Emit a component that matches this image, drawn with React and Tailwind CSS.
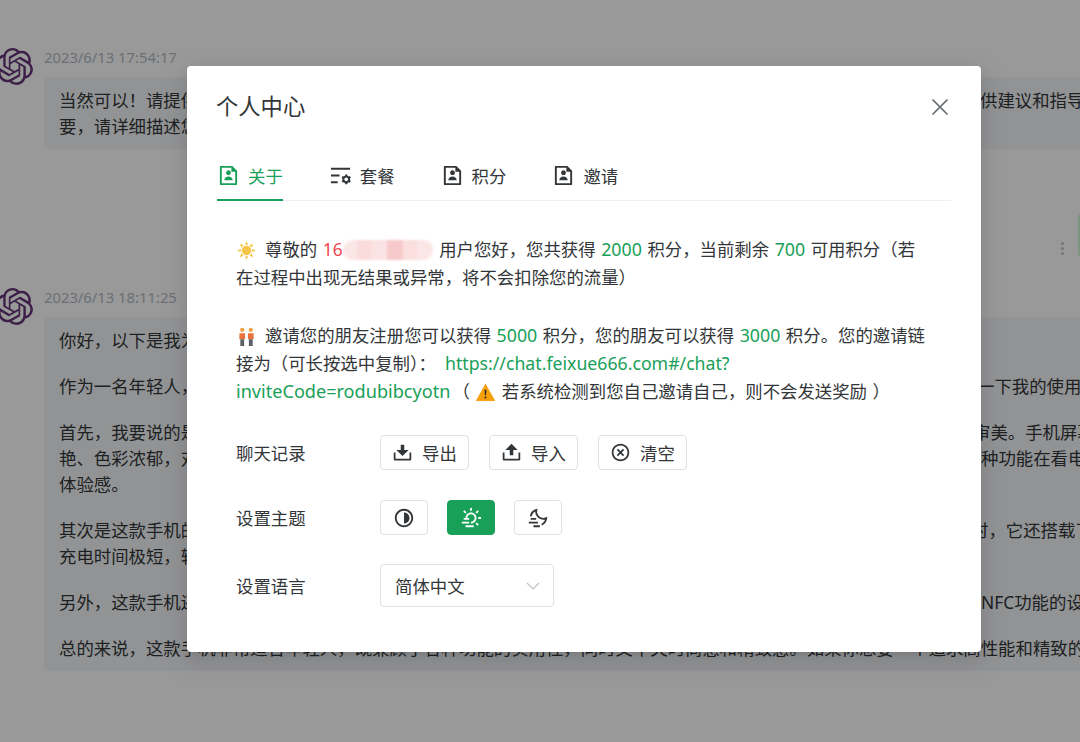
import React from 'react';
import {
  RiFileUserLine,
  RiListSettingsLine,
  RiDownload2Fill,
  RiUpload2Fill,
  RiCloseCircleLine,
  RiContrastLine,
  RiSunFoggyLine,
  RiMoonFoggyLine,
} from 'react-icons/ri';
import { SiOpenai } from 'react-icons/si';

// one line of the chat text: left part runs under the modal, right part comes out at the other side
function ChatLine({ left, right, leftWidth }) {
  return (
    <div className="flex h-[26px] whitespace-nowrap">
      <span className={`${leftWidth} shrink-0 overflow-hidden`}>{left}</span>
      {right && <span>{right}</span>}
    </div>
  );
}

function Stamp({ children }) {
  return (
    <div className="flex items-start -ml-[4px]">
      <SiOpenai size={37} className="mt-[1px] shrink-0 text-[#64327a]" />
      <div className="ml-[11px] h-[20px] text-[14.8px] leading-[20px] text-[#b4bbc4]">{children}</div>
    </div>
  );
}

function Bubble({ children }) {
  return (
    <div className="-mt-[8px] ml-[44px] w-[1100px] rounded-[5px] bg-[#f4f6f8] px-[15px] py-[10px] text-[17.4px] leading-[26px] text-[#333639]">
      {children}
    </div>
  );
}

function Chat() {
  return (
    <div className="pt-[47px]">
      <Stamp>2023/6/13 17:54:17</Stamp>
      <Bubble>
        <ChatLine left="当然可以！请提供您的具体问题" right="供建议和指导" leftWidth="w-[921px]" />
        <ChatLine left="要，请详细描述您的需求" leftWidth="w-[921px]" />
      </Bubble>

      <div className="mt-[65px] flex h-[42px] items-end justify-end">
        <div className="mr-[14px] flex flex-col gap-[2px] pb-[1px]">
          <span className="h-[3px] w-[3px] rounded-full bg-[#c4c4c4]" />
          <span className="h-[3px] w-[3px] rounded-full bg-[#c4c4c4]" />
          <span className="h-[3px] w-[3px] rounded-full bg-[#c4c4c4]" />
        </div>
        <div className="h-[42px] w-[2px] rounded-l-[3px] bg-[#d2f9d1]" />
      </div>

      <div className="mt-[31px]">
        <Stamp>2023/6/13 18:11:25</Stamp>
        <Bubble>
          <ChatLine left="你好，以下是我为您写的手机评测" leftWidth="w-[921px]" />
          <div className="mt-[20px]">
            <ChatLine left="作为一名年轻人，我最近入手了这款手机" right="一下我的使用心得" leftWidth="w-[918px]" />
          </div>
          <div className="mt-[20px]">
            <ChatLine left="首先，我要说的是这款手机的外观" right="审美。手机屏幕" leftWidth="w-[914px]" />
            <ChatLine left="艳、色彩浓郁，对比度高" right="种功能在看电" leftWidth="w-[922px]" />
            <ChatLine left="体验感。" leftWidth="w-[922px]" />
          </div>
          <div className="mt-[20px]">
            <ChatLine left="其次是这款手机的性能" right="时，它还搭载了" leftWidth="w-[912px]" />
            <ChatLine left="充电时间极短，轻松满足日常使用" leftWidth="w-[922px]" />
          </div>
          <div className="mt-[20px]">
            <ChatLine left="另外，这款手机还支持多种功能" right="NFC功能的设" leftWidth="w-[922px]" />
          </div>
          <div className="mt-[20px] h-[26px] whitespace-nowrap">
            总的来说，这款手机非常适合年轻人，既兼顾了各种功能的实用性，同时又不失时尚感和精致感。如果你想要一个追求高性能和精致的手机
          </div>
        </Bubble>
      </div>
    </div>
  );
}

function Tab({ icon, label, active }) {
  return (
    <div
      className={`-mb-px flex h-[49px] items-center gap-[8px] border-b-2 ${
        active ? 'border-[#18a058] text-[#18a058]' : 'border-transparent text-[#333639]'
      }`}
    >
      {icon}
      <span>{label}</span>
    </div>
  );
}

function ActionButton({ icon, label }) {
  return (
    <button className="flex h-[35px] w-[89px] items-center justify-center gap-[9px] rounded-[4px] border border-[#e0e0e6] bg-white text-[#333639]">
      {icon}
      <span>{label}</span>
    </button>
  );
}

function ThemeButton({ icon, active }) {
  return (
    <button
      className={`flex h-[35px] w-[48px] items-center justify-center rounded-[4px] border ${
        active ? 'border-[#18a058] bg-[#18a058] text-white' : 'border-[#e0e0e6] bg-white text-[#333639]'
      }`}
    >
      {icon}
    </button>
  );
}

function SunEmoji() {
  return (
    <svg viewBox="0 0 20 20" className="mr-[9px] ml-px inline-block h-[19px] w-[19px] -translate-y-[1px] align-middle">
      <g fill="#f7c648">
        <circle cx="10" cy="10" r="5" />
        <path d="M10 0l1.600 4h-3.200zM10 20l-1.600-4h3.200zM0 10l4-1.600v3.200zM20 10l-4 1.600V8.400zM3 3l4 1.600L4.600 7zM17 17l-4-1.600L15.400 13zM17 3l-1.600 4L13 4.600zM3 17l1.600-4L7 15.400z" />
      </g>
    </svg>
  );
}

function PeopleEmoji() {
  return (
    <svg viewBox="0 0 20 20" className="mr-[9px] ml-px inline-block h-[19px] w-[19px] -translate-y-[1px] align-middle">
      <circle cx="5.500" cy="3" r="2.300" fill="#f0a24b" />
      <circle cx="14.500" cy="3" r="2.300" fill="#f0a24b" />
      <path d="M2.500 6.500h6v6.500h-6zM11.500 6.500h6v6.500h-6z" fill="#e8743b" />
      <path d="M3.500 13h4v7h-4zM12.500 13h4v7h-4z" fill="#5b5f66" />
    </svg>
  );
}

function WarnEmoji() {
  return (
    <svg viewBox="0 0 20 20" className="mr-[7px] ml-[6px] inline-block h-[19px] w-[19px] -translate-y-[1px] align-middle">
      <path d="M10 1.500L19.500 18.500H.5z" fill="#f59f0b" stroke="#f59f0b" strokeLinejoin="round" />
      <path d="M9 7h2l-.4 6h-1.200z" fill="#2b2b2b" />
      <circle cx="10" cy="15.300" r="1.100" fill="#2b2b2b" />
    </svg>
  );
}

function BlurredPhone() {
  return (
    <span className="mr-px inline-flex h-[20px] w-[90px] translate-y-[4px] overflow-hidden rounded-full bg-[#fbe6e6] blur-[1px]">
      <span className="ml-[14px] w-[14px] bg-[#fadcdc]" />
      <span className="w-[16px] bg-[#fbe3e3]" />
      <span className="w-[16px] bg-[#f6caca]" />
      <span className="w-[14px] bg-[#fbdede]" />
    </span>
  );
}

function Num({ children }) {
  return <span className="text-[17.8px] text-[#18a058]">{children}</span>;
}

export default function App() {
  return (
    <div className="relative h-[742px] w-[1080px] overflow-hidden bg-white font-['Noto_Sans','Noto_Sans_CJK_SC',sans-serif]">
      <Chat />

      <div className="absolute inset-0 bg-black/40 pt-[66px] pl-[187px]">
        <div className="h-[586px] w-[794px] rounded-[4px] bg-white px-[30px] pt-[25px] text-[17.4px] leading-[28px] text-[#333639] shadow-[0_3px_6px_-4px_rgba(0,0,0,0.12),0_6px_16px_0_rgba(0,0,0,0.08),0_9px_28px_8px_rgba(0,0,0,0.05)]">
          <div className="flex h-[32px] items-center justify-between pr-[3px]">
            <h2 className="-ml-px text-[22.3px] leading-[32px]">个人中心</h2>
            <svg viewBox="0 0 16 16" className="h-[16px] w-[16px] text-[#666a70]">
              <path d="M1 1l14 14M15 1L1 15" stroke="currentColor" strokeWidth="1.700" strokeLinecap="round" />
            </svg>
          </div>

          <div className="mt-[29px] flex gap-[46px] border-b border-[#efeff5]">
            <Tab active label="关于" icon={<RiFileUserLine size={23} />} />
            <Tab label="套餐" icon={<RiListSettingsLine size={23} />} />
            <Tab label="积分" icon={<RiFileUserLine size={23} />} />
            <Tab label="邀请" icon={<RiFileUserLine size={23} />} />
          </div>

          <div className="pt-[34px] pr-[20px] pl-[19px] [word-spacing:1px]">
            <p className="whitespace-nowrap">
              <SunEmoji />
              尊敬的 <span className="text-[#f0484e]">16</span>
              <BlurredPhone /> 用户您好，您共获得 <Num>2000</Num> 积分，当前剩余 <Num>700</Num> 可用积分（若
              <br />
              在过程中出现无结果或异常，将不会扣除您的流量）
            </p>
            <p className="mt-[30px] whitespace-nowrap">
              <PeopleEmoji />
              邀请您的朋友注册您可以获得 <Num>5000</Num> 积分，您的朋友可以获得 <Num>3000</Num> 积分。您的邀请链
              <br />
              接为（可长按选中复制）：<span className="ml-[9px] text-[17.7px] text-[#18a058]">https://chat.feixue666.com#/chat?</span>
              <br />
              <span className="text-[18.1px] text-[#18a058]">inviteCode=rodubibcyotn</span>
              <span className="ml-[2px]">（</span>
              <WarnEmoji />
              若系统检测到您自己邀请自己，则不会发送奖励 ）
            </p>

            <div className="mt-[30px] flex flex-col gap-[30px]">
              <div className="flex items-center">
                <span className="w-[144px] shrink-0">聊天记录</span>
                <div className="flex gap-[20px]">
                  <ActionButton label="导出" icon={<RiDownload2Fill size={21} />} />
                  <ActionButton label="导入" icon={<RiUpload2Fill size={21} />} />
                  <ActionButton label="清空" icon={<RiCloseCircleLine size={21} />} />
                </div>
              </div>
              <div className="flex items-center">
                <span className="w-[144px] shrink-0">设置主题</span>
                <div className="flex gap-[19px]">
                  <ThemeButton icon={<RiContrastLine size={22} />} />
                  <ThemeButton active icon={<RiSunFoggyLine size={22} />} />
                  <ThemeButton icon={<RiMoonFoggyLine size={22} />} />
                </div>
              </div>
              <div className="-mt-px flex items-center">
                <span className="w-[144px] shrink-0">设置语言</span>
                <div className="flex h-[43px] w-[174px] items-center justify-between rounded-[4px] border border-[#e0e0e6] pr-[13px] pl-[14px]">
                  <span>简体中文</span>
                  <svg viewBox="0 0 14 8" className="h-[8px] w-[14px] text-[#c2c2c2]">
                    <path d="M1 1l6 6 6-6" fill="none" stroke="currentColor" strokeWidth="1.200" />
                  </svg>
                </div>
              </div>
            </div>
          </div>
        </div>
      </div>
    </div>
  );
}
